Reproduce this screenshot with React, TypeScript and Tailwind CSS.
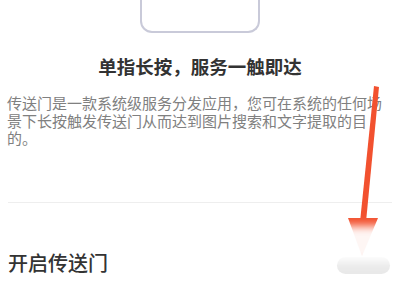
import React from 'react';

const Arrow: React.FC = () => (
  <svg className="absolute left-0 top-0 pointer-events-none" width="400" height="300" viewBox="0 0 400 300">
    <polygon points="374,86 379,87 366,222 360,222" fill="#f2512f" />
    <polygon points="348,218 378,218 362,256" fill="#f2512f" />
  </svg>
);

export default function App() {
  return (
    <div
      className="relative w-[400px] h-[300px] overflow-hidden bg-white"
      style={{ fontFamily: '"Noto Sans CJK SC", "Noto Sans", sans-serif' }}
    >
      <div className="mx-auto w-[120px] h-[33px] border-2 border-t-0 border-[#c9cad9] rounded-b-[12px]" />

      <h1 className="mt-[21px] text-center text-[18.5px] leading-[24px] font-bold text-[#333333]">
        单指长按，服务一触即达
      </h1>

      <p className="mt-[16px] px-[7px] text-[15px] leading-[17.5px] text-[#808080]">
        传送门是一款系统级服务分发应用，您可在系统的任何场景下长按触发传送门从而达到图片搜索和文字提取的目的。
      </p>

      <div className="mx-[8px] mt-[55px] h-px bg-[#eeeeee]" />

      <div className="mt-[46px] flex items-center justify-between pl-[8px] pr-[10px]">
        <span className="text-[20px] leading-[28px] font-medium text-[#333333]">开启传送门</span>
        <div className="mt-[6px] w-[53px] h-[17px] rounded-full bg-[#e9e9e9]" />
      </div>

      <Arrow />

      <div className="absolute left-[322px] top-[226px] w-[84px] h-[36px] bg-white blur-[4px] opacity-95" />
    </div>
  );
}
